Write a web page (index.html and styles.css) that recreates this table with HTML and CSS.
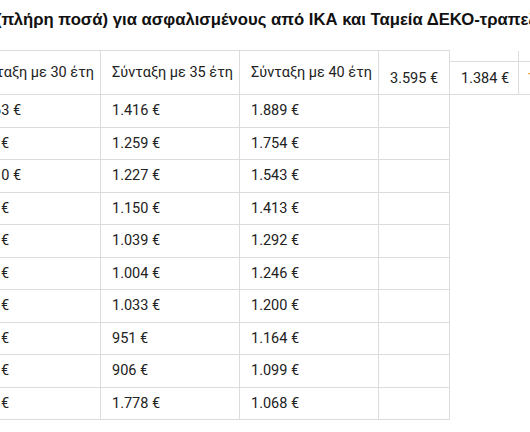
FILE: index.html
```html
<!DOCTYPE html>
<html lang="el">
<head>
<meta charset="utf-8">
<link rel="stylesheet" href="styles.css">
</head>
<body>
<div class="page">
  <h2 class="title">(πλήρη ποσά) για ασφαλισμένους από ΙΚΑ και Ταμεία ΔΕΚΟ-τραπεζών</h2>
  <table class="pensions">
    <colgroup>
      <col class="c-wide"><col class="c-wide"><col class="c-wide">
      <col class="c-mid"><col class="c-narrow"><col class="c-rest">
    </colgroup>
    <tr class="head">
      <th>Σύνταξη με 30 έτη</th>
      <th>Σύνταξη με 35 έτη</th>
      <th>Σύνταξη με 40 έτη</th>
      <td class="extra first"><div>3.595 €</div></td>
      <td class="extra"><div class="boxed">1.384 €</div></td>
      <td class="extra cut"><div class="boxed">1.100 €</div></td>
    </tr>
    <tr><td>1.163 €</td><td>1.416 €</td><td>1.889 €</td><td></td></tr>
    <tr><td>984 €</td><td>1.259 €</td><td>1.754 €</td><td></td></tr>
    <tr><td>1.010 €</td><td>1.227 €</td><td>1.543 €</td><td></td></tr>
    <tr><td>946 €</td><td>1.150 €</td><td>1.413 €</td><td></td></tr>
    <tr><td>855 €</td><td>1.039 €</td><td>1.292 €</td><td></td></tr>
    <tr><td>826 €</td><td>1.004 €</td><td>1.246 €</td><td></td></tr>
    <tr><td>850 €</td><td>1.033 €</td><td>1.200 €</td><td></td></tr>
    <tr><td>782 €</td><td>951 €</td><td>1.164 €</td><td></td></tr>
    <tr><td>746 €</td><td>906 €</td><td>1.099 €</td><td></td></tr>
    <tr><td>863 €</td><td>1.778 €</td><td>1.068 €</td><td></td></tr>
  </table>
</div>
</body>
</html>
```
FILE: styles.css
```css
html, body {
  margin: 0;
  padding: 0;
  background: #fff;
  overflow: hidden;
}
.page {
  width: 660px;
  margin-left: -39px;
  color: #222;
}
.title {
  margin: 0;
  padding: 11px 0 0 35px;
  height: 39px;
  box-sizing: border-box;
  font-family: "Liberation Sans", Arial, sans-serif;
  font-weight: bold;
  font-size: 16.7px;
  line-height: 18px;
  white-space: nowrap;
  color: #111;
}
.pensions {
  border-collapse: collapse;
  table-layout: fixed;
  width: 620px;
  margin-top: 11px;
  font-family: Roboto, "Noto Sans", sans-serif;
  font-size: 14.5px;
  color: #222;
}
.c-wide { width: 139px; }
.c-mid { width: 71px; }
.c-narrow { width: 69px; }
.c-rest { width: 103px; }
.pensions th,
.pensions td {
  border: 1px solid #dcdcdc;
  padding: 0 11px;
  height: 31.5px;
  text-align: left;
  font-weight: normal;
  white-space: nowrap;
  vertical-align: middle;
}
.pensions th {
  height: 43px;
}
.pensions .extra {
  vertical-align: bottom;
  padding: 0;
  border-top: none;
}
.pensions .extra.first {
  border-top: 1px solid #dcdcdc;
}
.pensions .extra div {
  height: 32px;
  display: flex;
  align-items: center;
  padding: 0 11px;
}
.pensions .extra div.boxed {
  border-top: 1px solid #dcdcdc;
}
.pensions .extra.cut div {
  padding-left: 8px;
  color: #e8a23c;
}
```
